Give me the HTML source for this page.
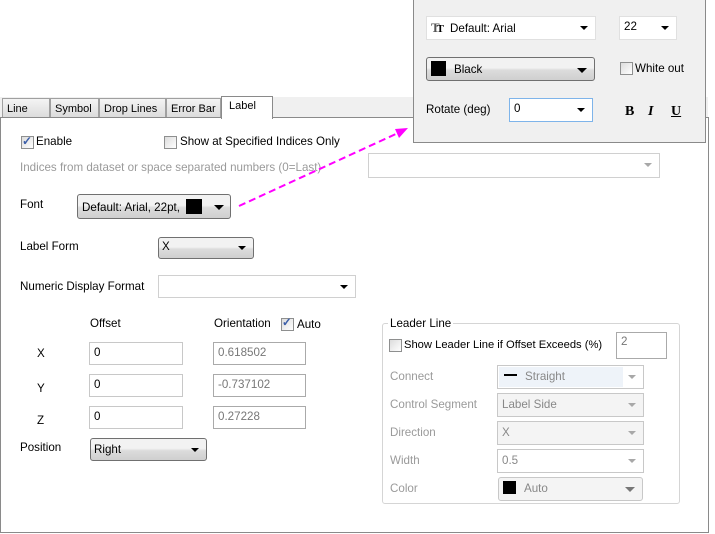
<!DOCTYPE html>
<html><head><style>
body{margin:0;width:715px;height:534px;background:#fff;position:relative;overflow:hidden;font-family:"Liberation Sans",sans-serif;font-size:11.6px;color:#000}
.a{position:absolute;white-space:nowrap}
.t{position:absolute;line-height:14px;white-space:nowrap}
.g{color:#9a9a9a}
.tab{position:absolute;top:98px;height:19px;background:linear-gradient(#f4f4f4,#dcdcdc);border:1px solid #a0a0a0;border-bottom:none;box-sizing:border-box;padding:3px 0 0 4px;line-height:14px;font-size:11px;overflow:hidden}
.cb{position:absolute;width:11px;height:11px;border:1px solid #8e8f8f;background:linear-gradient(135deg,#dcdcdc,#fff)}
.in{position:absolute;border:1px solid #b5b5b5;background:#fff;box-sizing:border-box;padding:2px 4px;line-height:16px}
.btn{position:absolute;border:1px solid #707070;border-radius:3px;background:linear-gradient(#f2f2f2 45%,#dcdcdc 55%,#cfcfcf);box-sizing:border-box;padding:2px 4px;line-height:16px}
.arr{position:absolute;right:7px;top:9px;width:0;height:0;border-left:4px solid transparent;border-right:4px solid transparent;border-top:4px solid #000}
.garr{border-top-color:#a8a8a8}
.sw{display:inline-block;width:13px;height:13px;background:#000;vertical-align:-2px}
</style></head><body>
<div class="a" style="left:0;top:97px;width:708px;height:21px;background:#f0f0f0"></div>
<div class="tab" style="left:2px;width:48px">Line</div>
<div class="tab" style="left:50px;width:49px">Symbol</div>
<div class="tab" style="left:99px;width:67px">Drop Lines</div>
<div class="tab" style="left:166px;width:55px">Error Bar</div>
<div class="a" style="left:0;top:117px;width:707px;height:414px;border:1px solid #8a8a8a;background:#fff"></div>
<div class="tab" style="left:221px;top:96px;width:52px;height:23px;background:#fff;border-color:#8a8a8a;padding:2px 0 0 7px">Label</div>

<div class="cb" style="left:21px;top:136px"></div><div class="t" style="left:22px;top:134px;color:#3b5ea8;font-size:12px;font-weight:bold">✓</div>
<div class="t" style="left:36px;top:135px">Enable</div>
<div class="cb" style="left:164px;top:136px"></div>
<div class="t" style="left:180px;top:135px">Show at Specified Indices Only</div>
<div class="t g" style="left:20px;top:161px">Indices from dataset or space separated numbers (0=Last)</div>
<div class="in" style="left:368px;top:153px;width:292px;height:25px;border-color:#d0d0d0"><div class="arr garr"></div></div>

<div class="t" style="left:20px;top:198px">Font</div>
<div class="btn" style="left:77px;top:194px;width:154px;height:25px;padding-top:4px">Default: Arial, 22pt, &nbsp;<span class="sw" style="width:16px;height:15px;vertical-align:-3px"></span><div class="arr" style="top:10px;right:6px;border-left-width:5px;border-right-width:5px;border-top-width:5px"></div></div>

<div class="t" style="left:20px;top:240px">Label Form</div>
<div class="btn" style="left:158px;top:237px;width:96px;height:22px;padding:1px 3px">X<div class="arr" style="top:8px"></div></div>
<div class="t" style="left:20px;top:280px">Numeric Display Format</div>
<div class="in" style="left:158px;top:275px;width:198px;height:23px;border-color:#d0d0d0"><div class="arr" style="top:9px"></div></div>

<div class="t" style="left:90px;top:317px">Offset</div>
<div class="t" style="left:214px;top:317px">Orientation</div>
<div class="cb" style="left:281px;top:318px"></div><div class="t" style="left:282px;top:316px;color:#3b5ea8;font-weight:bold">✓</div>
<div class="t" style="left:297px;top:318px">Auto</div>
<div class="t" style="left:37px;top:347px">X</div>
<div class="t" style="left:37px;top:382px">Y</div>
<div class="t" style="left:37px;top:414px">Z</div>
<div class="in" style="left:89px;top:342px;width:94px;height:23px;border-color:#c8c8c8">0</div>
<div class="in" style="left:89px;top:374px;width:94px;height:23px;border-color:#c8c8c8">0</div>
<div class="in" style="left:89px;top:406px;width:94px;height:23px;border-color:#c8c8c8">0</div>
<div class="in g" style="left:213px;top:342px;width:93px;height:23px;color:#777;border-color:#aaa">0.618502</div>
<div class="in g" style="left:213px;top:374px;width:93px;height:23px;color:#777;border-color:#aaa">-0.737102</div>
<div class="in g" style="left:213px;top:406px;width:93px;height:23px;color:#777;border-color:#aaa">0.27228</div>
<div class="t" style="left:20px;top:441px">Position</div>
<div class="btn" style="left:90px;top:438px;width:117px;height:23px;padding:3px 3px 1px">Right<div class="arr" style="top:9px"></div></div>

<div class="a" style="left:382px;top:323px;width:296px;height:179px;border:1px solid #d5d5d5;border-radius:3px"></div>
<div class="t" style="left:388px;top:317px;background:#fff;padding:0 2px">Leader Line</div>
<div class="cb" style="left:389px;top:339px"></div>
<div class="t" style="left:404px;top:338px;font-size:11.2px">Show Leader Line if Offset Exceeds (%)</div>
<div class="in g" style="left:616px;top:332px;width:51px;height:27px;padding-top:1px;color:#777;border-color:#aaa">2</div>
<div class="t g" style="left:390px;top:370px">Connect</div>
<div class="t g" style="left:390px;top:398px">Control Segment</div>
<div class="t g" style="left:390px;top:426px">Direction</div>
<div class="t g" style="left:390px;top:454px">Width</div>
<div class="t g" style="left:390px;top:482px">Color</div>
<div class="in" style="left:497px;top:365px;width:147px;height:24px;border-color:#c8c8c8;background:#fff;padding-top:3px"><div class="a" style="left:1px;top:1px;width:124px;height:20px;background:#eef3f9"></div><span style="position:relative;color:#888"><span style="display:inline-block;width:13px;height:2px;background:#000;vertical-align:4px;margin:0 8px 0 2px"></span>Straight</span><div class="arr garr"></div></div>
<div class="in" style="left:497px;top:393px;width:147px;height:24px;border-color:#c8c8c8;background:#f4f4f4;color:#888;padding-top:3px">Label Side<div class="arr garr"></div></div>
<div class="in" style="left:497px;top:421px;width:147px;height:24px;border-color:#c8c8c8;background:#f4f4f4;color:#888;padding-top:3px">X<div class="arr garr"></div></div>
<div class="in" style="left:497px;top:449px;width:147px;height:24px;border-color:#c8c8c8;color:#888;padding-top:3px">0.5<div class="arr garr"></div></div>
<div class="in" style="left:498px;top:477px;width:145px;height:24px;border-color:#c8c8c8;border-radius:3px;background:#f4f4f4;color:#888;padding-top:3px"><span class="sw" style="margin-right:8px"></span>Auto<div class="arr" style="border-top-color:#777;border-left-width:5px;border-right-width:5px;border-top-width:5px"></div></div>

<svg class="a" style="left:0;top:0" width="715" height="534"><line x1="239" y1="206" x2="398" y2="133" stroke="#ff00ff" stroke-width="2" stroke-dasharray="7,4"/><polygon points="408,128 395,129 399,138" fill="#ff00ff"/></svg>

<div class="a" style="left:413px;top:0;width:291px;height:142px;border:1px solid #8a8a8a;border-top:none;background:#f0f0f0"></div>
<div class="in" style="left:426px;top:16px;width:170px;height:24px;border-color:#e0e0e0;padding-top:3px"><span style="font-family:'Liberation Serif',serif;font-weight:bold;font-size:13px;color:#555">T</span><span style="font-family:'Liberation Serif',serif;font-weight:bold;font-size:11px;margin-left:-3px;margin-right:6px">T</span>Default: Arial<div class="arr"></div></div>
<div class="in" style="left:619px;top:16px;width:58px;height:24px;border-color:#e0e0e0;padding-top:2px">22<div class="arr"></div></div>
<div class="btn" style="left:426px;top:57px;width:169px;height:24px;padding:3px 4px"><span class="sw" style="width:15px;height:15px;vertical-align:-3px;margin-right:8px"></span>Black<div class="arr" style="top:10px;border-left-width:5px;border-right-width:5px;border-top-width:5px"></div></div>
<div class="cb" style="left:620px;top:62px"></div>
<div class="t" style="left:635px;top:62px">White out</div>
<div class="t" style="left:426px;top:103px">Rotate (deg)</div>
<div class="in" style="left:509px;top:98px;width:84px;height:24px;border-color:#7eb4ea;padding-top:2px">0<div class="arr"></div></div>
<div class="t" style="left:625px;top:105px;font-family:'Liberation Serif',serif;font-weight:bold;font-size:14px">B</div>
<div class="t" style="left:648px;top:105px;font-family:'Liberation Serif',serif;font-weight:bold;font-style:italic;font-size:14px">I</div>
<div class="t" style="left:671px;top:105px;font-family:'Liberation Serif',serif;font-weight:bold;text-decoration:underline;font-size:14px">U</div>
</body></html>
